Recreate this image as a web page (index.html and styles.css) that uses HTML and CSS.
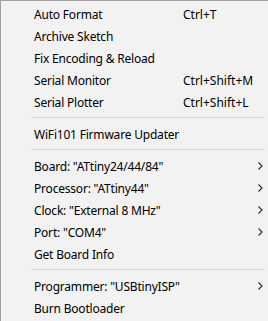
FILE: index.html
```html
<!DOCTYPE html>
<html lang="en">
<head>
    <meta charset="UTF-8">
    <title>Tools menu</title>
    <link rel="stylesheet" href="styles.css">
</head>
<body>
<ul class="menu">
    <li class="item"><span class="label">Auto Format</span><span class="key">Ctrl+T</span></li>
    <li class="item"><span class="label">Archive Sketch</span></li>
    <li class="item"><span class="label">Fix Encoding &amp; Reload</span></li>
    <li class="item"><span class="label">Serial Monitor</span><span class="key">Ctrl+Shift+M</span></li>
    <li class="item"><span class="label">Serial Plotter</span><span class="key">Ctrl+Shift+L</span></li>
    <li class="sep"></li>
    <li class="item"><span class="label">WiFi101 Firmware Updater</span></li>
    <li class="sep"></li>
    <li class="item"><span class="label">Board: "ATtiny24/44/84"</span><svg class="arrow" width="5" height="8" viewBox="0 0 5 8"><path d="M0.5 0.5 L4 4 L0.5 7.5" fill="none" stroke="#333" stroke-width="1.2"/></svg></li>
    <li class="item"><span class="label">Processor: "ATtiny44"</span><svg class="arrow" width="5" height="8" viewBox="0 0 5 8"><path d="M0.5 0.5 L4 4 L0.5 7.5" fill="none" stroke="#333" stroke-width="1.2"/></svg></li>
    <li class="item"><span class="label">Clock: "External 8 MHz"</span><svg class="arrow" width="5" height="8" viewBox="0 0 5 8"><path d="M0.5 0.5 L4 4 L0.5 7.5" fill="none" stroke="#333" stroke-width="1.2"/></svg></li>
    <li class="item"><span class="label">Port: "COM4"</span><svg class="arrow" width="5" height="8" viewBox="0 0 5 8"><path d="M0.5 0.5 L4 4 L0.5 7.5" fill="none" stroke="#333" stroke-width="1.2"/></svg></li>
    <li class="item"><span class="label">Get Board Info</span></li>
    <li class="sep"></li>
    <li class="item"><span class="label">Programmer: "USBtinyISP"</span><svg class="arrow" width="5" height="8" viewBox="0 0 5 8"><path d="M0.5 0.5 L4 4 L0.5 7.5" fill="none" stroke="#333" stroke-width="1.2"/></svg></li>
    <li class="item"><span class="label">Burn Bootloader</span></li>
</ul>
</body>
</html>
```
FILE: styles.css
```css
* {
    margin: 0;
    padding: 0;
    box-sizing: border-box;
}
html, body {
    height: 100%;
    background: #f2f2f2;
}
.menu {
    list-style: none;
    min-height: 100%;
    padding: 2px 0;
    border-left: 1px solid #a0a0a0;
    border-top: 1px solid #a0a0a0;
    background: #f2f2f2;
    font-family: "Noto Sans", sans-serif;
    font-size: 12px;
    color: #000;
}
.item {
    display: flex;
    align-items: center;
    height: 22px;
    padding-left: 33px;
    white-space: nowrap;
}
.label {
    width: 149px;
    letter-spacing: -0.2px;
}
.key {
    flex: 1;
}
.arrow {
    margin-left: auto;
    margin-right: 5px;
    display: block;
}
.sep {
    height: 1px;
    margin: 4px 3px 5px 30px;
    background: #d7d7d7;
}
```
